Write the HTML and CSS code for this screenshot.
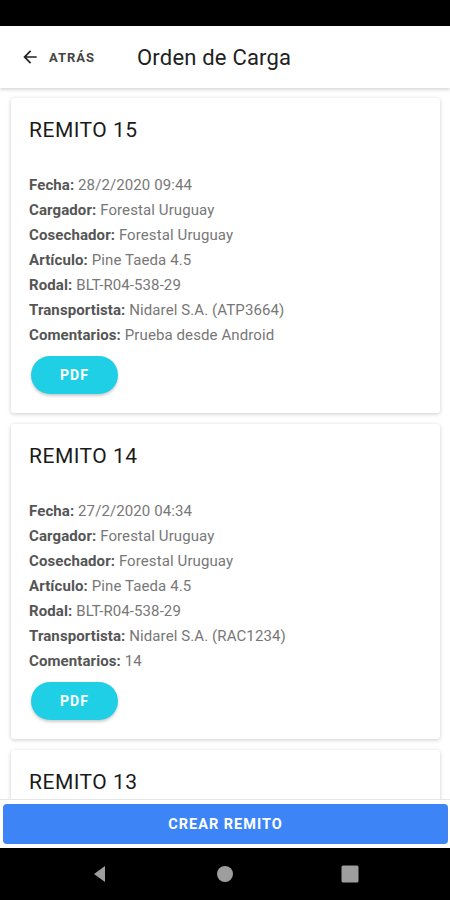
FILE: index.html
```html
<!DOCTYPE html>
<html lang="es">
<head>
  <meta charset="UTF-8">
  <meta name="viewport" content="width=device-width, initial-scale=1.0">
  <title>Orden de Carga</title>
  <link rel="stylesheet" href="styles.css">
</head>
<body>

  <div class="status-bar"></div>

  <header class="app-bar">
    <div class="back">
      <svg width="20" height="20" viewBox="0 0 24 24"><path d="M20 11H7.83l5.59-5.59L12 4l-8 8 8 8 1.41-1.41L7.83 13H20v-2z" fill="#222"/></svg>
      <span>ATRÁS</span>
    </div>
    <h1>Orden de Carga</h1>
  </header>

  <main class="list">

    <div class="card">
      <h2>REMITO 15</h2>
      <ul class="fields">
        <li><b>Fecha:</b> 28/2/2020 09:44</li>
        <li><b>Cargador:</b> Forestal Uruguay</li>
        <li><b>Cosechador:</b> Forestal Uruguay</li>
        <li><b>Artículo:</b> Pine Taeda 4.5</li>
        <li><b>Rodal:</b> BLT-R04-538-29</li>
        <li><b>Transportista:</b> Nidarel S.A. (ATP3664)</li>
        <li><b>Comentarios:</b> Prueba desde Android</li>
      </ul>
      <div class="pdf">PDF</div>
    </div>

    <div class="card">
      <h2>REMITO 14</h2>
      <ul class="fields">
        <li><b>Fecha:</b> 27/2/2020 04:34</li>
        <li><b>Cargador:</b> Forestal Uruguay</li>
        <li><b>Cosechador:</b> Forestal Uruguay</li>
        <li><b>Artículo:</b> Pine Taeda 4.5</li>
        <li><b>Rodal:</b> BLT-R04-538-29</li>
        <li><b>Transportista:</b> Nidarel S.A. (RAC1234)</li>
        <li><b>Comentarios:</b> 14</li>
      </ul>
      <div class="pdf">PDF</div>
    </div>

    <div class="card card-last">
      <h2>REMITO 13</h2>
    </div>

  </main>

  <footer class="actions">
    <div class="create">CREAR REMITO</div>
  </footer>

  <nav class="nav-bar">
    <svg width="20" height="20" viewBox="0 0 20 20"><path d="M15 2 L4 10 L15 18 Z" fill="#9e9e9e"/></svg>
    <svg width="20" height="20" viewBox="0 0 20 20"><circle cx="10" cy="10" r="8" fill="#9e9e9e"/></svg>
    <svg width="20" height="20" viewBox="0 0 20 20"><rect x="1.5" y="1.5" width="17" height="17" rx="1.5" fill="#9e9e9e"/></svg>
  </nav>

</body>
</html>
```
FILE: styles.css
```css
body{
  margin: 0;
  height: 900px;
  display: flex;
  flex-direction: column;
  background-color: #fff;
  font-family: Roboto, 'Liberation Sans', sans-serif;
  overflow: hidden;
}

.status-bar{
  height: 26px;
  background-color: #000;
  flex: none;
}

.app-bar{
  height: 62px;
  flex: none;
  display: flex;
  align-items: center;
  background-color: #fff;
  box-shadow: 0 2px 3px rgba(0,0,0,.15);
  position: relative;
  z-index: 2;
}

.app-bar .back{
  display: flex;
  align-items: center;
  margin-left: 20px;
  width: 117px;
}

.app-bar .back span{
  margin-left: 9px;
  font-size: 13px;
  font-weight: 700;
  letter-spacing: 1px;
  color: #444;
}

.app-bar h1{
  margin: 0;
  font-size: 22px;
  font-weight: 400;
  letter-spacing: .2px;
  color: #212121;
}

.list{
  flex: 1;
  overflow: hidden;
  padding: 10px 10px 0 11px;
  min-height: 0;
}

.card{
  background-color: #fff;
  border-radius: 3px;
  box-shadow: 0 1px 4px rgba(0,0,0,.2);
  padding: 18px 18px 19px;
  margin-bottom: 11px;
}

.card-last{
  height: 80px;
}

.card h2{
  margin: 0;
  font-size: 21px;
  line-height: 28px;
  font-weight: 400;
  letter-spacing: .5px;
  color: #1a1a1a;
}

.fields{
  list-style: none;
  margin: 29px 0 0;
  padding: 0;
  font-size: 15px;
  line-height: 25px;
  letter-spacing: .1px;
  color: #777;
}

.fields b{
  color: #555;
  font-weight: 700;
}

.pdf{
  margin: 8px 0 0 2px;
  width: 87px;
  height: 38px;
  border-radius: 19px;
  background-color: #1ecfe6;
  color: #fff;
  font-size: 14px;
  font-weight: 700;
  letter-spacing: 1px;
  display: flex;
  align-items: center;
  justify-content: center;
  box-shadow: 0 2px 3px rgba(0,0,0,.2);
}

.actions{
  flex: none;
  padding: 4px 2px 4px 3px;
  background-color: #fff;
  border-top: 1px solid #e6e6e6;
  position: relative;
  z-index: 2;
}

.create{
  height: 40px;
  border-radius: 4px;
  background-color: #3d85f7;
  color: #fff;
  font-size: 14.5px;
  font-weight: 700;
  letter-spacing: 1px;
  display: flex;
  align-items: center;
  justify-content: center;
}

.nav-bar{
  height: 52px;
  flex: none;
  background-color: #000;
  display: flex;
  align-items: center;
  justify-content: space-between;
  padding: 0 90px;
}
```
